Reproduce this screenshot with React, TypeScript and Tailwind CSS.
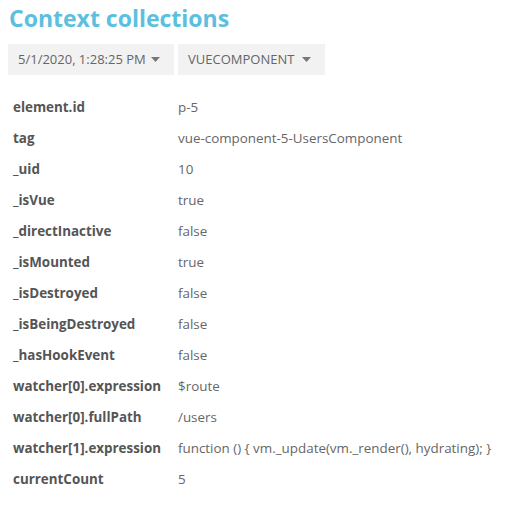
const rows: [string, string][] = [
  ["element.id", "p-5"],
  ["tag", "vue-component-5-UsersComponent"],
  ["_uid", "10"],
  ["_isVue", "true"],
  ["_directInactive", "false"],
  ["_isMounted", "true"],
  ["_isDestroyed", "false"],
  ["_isBeingDestroyed", "false"],
  ["_hasHookEvent", "false"],
  ["watcher[0].expression", "$route"],
  ["watcher[0].fullPath", "/users"],
  ["watcher[1].expression", "function () { vm._update(vm._render(), hydrating); }"],
  ["currentCount", "5"],
];

export default function App() {
  return (
    <div className="min-h-[507px] bg-white px-2 pt-[4px] font-['Open_Sans','Noto_Sans',sans-serif] text-[#666]">
      <h2 className="pl-[1px] text-[23px] font-bold leading-[28px] text-[#5bc0de]">Context collections</h2>

      <div className="mt-[12px] flex gap-1">
        <Dropdown label="5/1/2020, 1:28:25 PM" width="w-[166px]" />
        <Dropdown label="VUECOMPONENT" width="w-[147px]" />
      </div>

      <table className="mt-[17px] text-[13.4px]">
        <tbody>
          {rows.map(([k, v]) => (
            <tr key={k} className="h-[31px]">
              <td className="w-[170px] pl-[5px] font-bold text-[#555]">{k}</td>
              <td className="whitespace-nowrap">{v}</td>
            </tr>
          ))}
        </tbody>
      </table>
    </div>
  );
}

function Dropdown({ label, width }: { label: string; width: string }) {
  return (
    <button
      className={`flex h-[31px] ${width} items-center justify-between bg-[#f2f2f2] pl-[10px] pr-[14px] text-[13px] text-[#666]`}
    >
      <span>{label}</span>
      <svg width="9" height="5" viewBox="0 0 9 5" className="fill-[#777]">
        <path d="M0 0h9L4.5 5z" />
      </svg>
    </button>
  );
}
